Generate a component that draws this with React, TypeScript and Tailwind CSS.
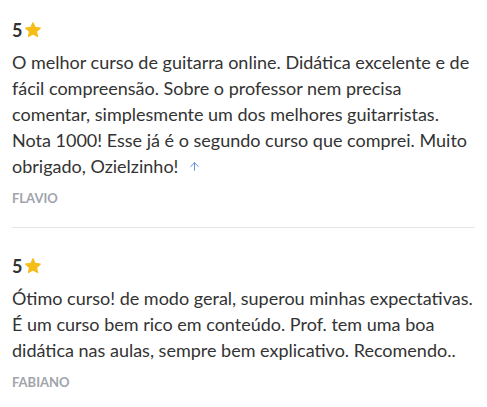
import { ArrowUp } from "lucide-react";

const reviews = [
  {
    rating: 5,
    text: "O melhor curso de guitarra online. Didática excelente e de fácil compreensão. Sobre o professor nem precisa comentar, simplesmente um dos melhores guitarristas. Nota 1000! Esse já é o segundo curso que comprei. Muito obrigado, Ozielzinho!",
    author: "FLAVIO",
    arrow: true,
  },
  {
    rating: 5,
    text: "Ótimo curso! de modo geral, superou minhas expectativas. É um curso bem rico em conteúdo. Prof. tem uma boa didática nas aulas, sempre bem explicativo. Recomendo..",
    author: "FABIANO",
    arrow: false,
  },
];

function Star() {
  return (
    <svg width="18" height="18" viewBox="0 0 24 24" className="fill-[#f5bd16]">
      <path d="M12 2.2l2.9 6.3 6.9.8-5.1 4.7 1.4 6.8L12 17.4l-6.1 3.4 1.4-6.8-5.1-4.7 6.9-.8z" strokeLinejoin="round" stroke="#f5bd16" strokeWidth="1.5" />
    </svg>
  );
}

export default function App() {
  return (
    <div className="bg-white w-[487px] h-[407px] px-3 pt-[18px] font-['Lato','Noto_Sans',sans-serif] text-[#333]">
      {reviews.map((r, i) => (
        <div key={i} className={i === 0 ? "pb-[21px] border-b border-[#e5e5e5]" : "pt-[26px]"}>
          <div className="flex items-center gap-[2px] text-[18px] font-bold leading-6">
            <span>{r.rating}</span>
            <Star />
          </div>
          <p className="mt-[7px] text-[18px] leading-[26px]">
            {r.text}
            {r.arrow && (
              <ArrowUp size={13} strokeWidth={1.75} className="inline ml-[10px] mb-[4px] text-[#5b86e5]" />
            )}
          </p>
          <div className="mt-[11px] text-[13px] font-bold text-[#a0a4ab] leading-4">{r.author}</div>
        </div>
      ))}
    </div>
  );
}
